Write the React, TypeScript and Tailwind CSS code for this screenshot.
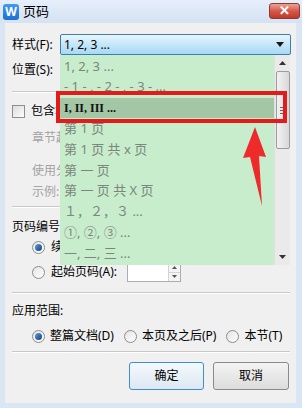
const font = { fontFamily: '"Noto Sans", "Noto Sans CJK SC", sans-serif' };

const Radio = ({ checked = false }: { checked?: boolean }) => (
  <span className="w-[13px] h-[13px] rounded-full border border-[#8c8c8c] bg-gradient-to-br from-[#e4e4e4] to-[#ffffff] flex items-center justify-center shrink-0">
    {checked && <span className="w-[7px] h-[7px] rounded-full bg-gradient-to-br from-[#5aa0e0] to-[#123f78]" />}
  </span>
);

const Sep = ({ mt }: { mt: string }) => (
  <div className={`${mt} h-[2px] border-t border-[#c9c9c9] border-b-white border-b mr-[6px]`} />
);

const items = [
  "1, 2, 3 ...",
  "- 1 - , - 2 - , - 3 - ...",
  "I, II, III ...",
  "第 1 页",
  "第 1 页 共 x 页",
  "第 一 页",
  "第 一 页 共 X 页",
  "１，２，３ ...",
  "①, ②, ③ ...",
  "一, 二, 三 ...",
];

export default function App() {
  return (
    <div className="relative w-[302px] h-[408px] bg-[#dae6f4] flex flex-col text-[12px] text-black overflow-hidden" style={font}>
      {/* Title bar */}
      <div className="h-[23px] flex items-center pl-[3px] pr-[2px] bg-gradient-to-b from-[#e6effa] to-[#d5e2f2]">
        <span className="w-[16px] h-[16px] rounded-[3px] bg-gradient-to-b from-[#3f9cf0] to-[#1f6fd0] text-white text-[12px] font-bold leading-none flex items-center justify-center">W</span>
        <span className="ml-[4px] text-[13px]">页码</span>
        <span className="ml-auto w-[31px] h-[16px] mb-[2px] rounded-[3px] border border-[#8e3a30] bg-gradient-to-b from-[#e9a394] via-[#d5584a] to-[#c0392c] text-white text-[13px] font-bold leading-none flex items-center justify-center">✕</span>
      </div>

      {/* Body */}
      <div className="relative ml-[5px] mr-[6px] mb-[5px] flex-1 bg-[#f0f0f0] pl-[7px] flex flex-col">
        <div className="mt-[11px] h-[21px] flex items-center">
          <span className="w-[48px]">样式(F):</span>
          <div className="w-[231px] h-[21px] border border-[#3c7fb1] rounded-[2px] bg-gradient-to-b from-[#eaf6fd] via-[#c4e6f9] to-[#a7d9f5] flex items-center pl-[3px] pr-[6px]">
            <span>1, 2, 3 ...</span>
            <svg className="ml-auto" width="8" height="5" viewBox="0 0 8 5"><path d="M0 0h8L4 5z" fill="#1a1a1a" /></svg>
          </div>
        </div>
        <div className="mt-[5px] h-[20px] flex items-center">位置(S):</div>
        <Sep mt="mt-[11px]" />
        <div className="mt-[8px] h-[20px] flex items-center gap-[6px]">
          <span className="w-[13px] h-[13px] border border-[#8f8f8f] bg-gradient-to-br from-[#dcdcdc] to-[#fdfdfd]" />
          <span>包含章节号(N)</span>
        </div>
        <div className="mt-[7px] h-[20px] flex items-center pl-[20px] text-[#a3a3a3]">章节起始样式(P):</div>
        <div className="mt-[13px] h-[20px] flex items-center pl-[20px] text-[#a3a3a3]">使用分隔符(E):</div>
        <div className="mt-[1px] h-[20px] flex items-center pl-[20px] text-[#a3a3a3]">示例:</div>
        <Sep mt="mt-[4px]" />
        <div className="mt-[9px] h-[20px] flex items-center">页码编号</div>
        <div className="h-[20px] flex items-center pl-[20px] gap-[6px]">
          <Radio checked />
          <span>续前节(C)</span>
        </div>
        <div className="mt-[5px] h-[20px] flex items-center pl-[20px] gap-[6px]">
          <Radio />
          <span>起始页码(A):</span>
          <div className="ml-[4px] w-[54px] h-[20px] border border-[#abadb3] bg-white flex justify-end">
            <div className="w-[12px] flex flex-col border-l border-[#d4d4d4]">
              <span className="flex-1 flex items-center justify-center border-b border-[#d4d4d4] bg-[#f4f4f4]">
                <svg width="5" height="3" viewBox="0 0 5 3"><path d="M0 3h5L2.5 0z" fill="#555" /></svg>
              </span>
              <span className="flex-1 flex items-center justify-center bg-[#f4f4f4]">
                <svg width="5" height="3" viewBox="0 0 5 3"><path d="M0 0h5L2.5 3z" fill="#555" /></svg>
              </span>
            </div>
          </div>
        </div>
        <Sep mt="mt-[10px]" />
        <div className="mt-[7px] h-[20px] flex items-center">应用范围:</div>
        <div className="mt-[5px] h-[20px] flex items-center pl-[20px]">
          <Radio checked />
          <span className="ml-[5px]">整篇文档(D)</span>
          <span className="ml-[10px]"><Radio /></span>
          <span className="ml-[5px]">本页及之后(P)</span>
          <span className="ml-[10px]"><Radio /></span>
          <span className="ml-[5px]">本节(T)</span>
        </div>
        <Sep mt="mt-[5px]" />
        <div className="mt-[9px] flex justify-end gap-[9px] pr-[7px]">
          <button className="w-[75px] h-[28px] rounded-[3px] border border-[#3c8ed6] bg-gradient-to-b from-[#f4f9fd] to-[#dde8f1] text-[12px]">确定</button>
          <button className="w-[76px] h-[28px] rounded-[3px] border border-[#8a8a8a] bg-gradient-to-b from-[#f4f4f4] to-[#dcdcdc] text-[12px]">取消</button>
        </div>

        {/* Dropdown list */}
        <div className="absolute left-[55px] top-[32px] w-[230px] h-[210px] bg-[#c8edcc] pt-[1px]">
          {items.map((t, i) =>
            i === 2 ? (
              <div key={i} className="h-[20.8px] mr-[16px] bg-[#a3c6a5] flex items-center pl-[4px] font-bold text-[12px] text-[#111]" style={{ fontFamily: '"Liberation Serif", serif' }}>
                {t}
              </div>
            ) : (
              <div key={i} className="h-[20.8px] mr-[16px] flex items-center pl-[4px] text-[#7b867c] text-[13px] whitespace-pre">
                {t}
              </div>
            )
          )}
          {/* Scrollbar */}
          <div className="absolute right-0 top-0 w-[16px] h-full bg-[#eaeaea] border-l border-[#e0e0e0] flex flex-col items-center">
            <div className="h-[16px] flex items-center justify-center">
              <svg width="7" height="4" viewBox="0 0 7 4"><path d="M0 4h7L3.5 0z" fill="#333" /></svg>
            </div>
            <div className="w-[14px] h-[78px] rounded-[2px] border border-[#9c9c9c] bg-gradient-to-r from-[#f2f2f2] to-[#d8d8d8] flex flex-col items-center justify-center gap-[2px]">
              <span className="w-[6px] h-px bg-[#666]" />
              <span className="w-[6px] h-px bg-[#666]" />
              <span className="w-[6px] h-px bg-[#666]" />
            </div>
            <div className="mt-auto h-[16px] flex items-center justify-center">
              <svg width="7" height="4" viewBox="0 0 7 4"><path d="M0 0h7L3.5 4z" fill="#333" /></svg>
            </div>
          </div>
        </div>
      </div>

      {/* Annotation: red box and arrow */}
      <div className="absolute left-[56px] top-[91px] w-[231px] h-[32px] border-[4px] border-[#e51b1b]" />
      <svg className="absolute left-0 top-0" width="302" height="408" viewBox="0 0 302 408">
        <polygon points="255,127 266,157 259,156 262,206 250,157 243,158" fill="#ee2a2a" />
      </svg>
    </div>
  );
}
